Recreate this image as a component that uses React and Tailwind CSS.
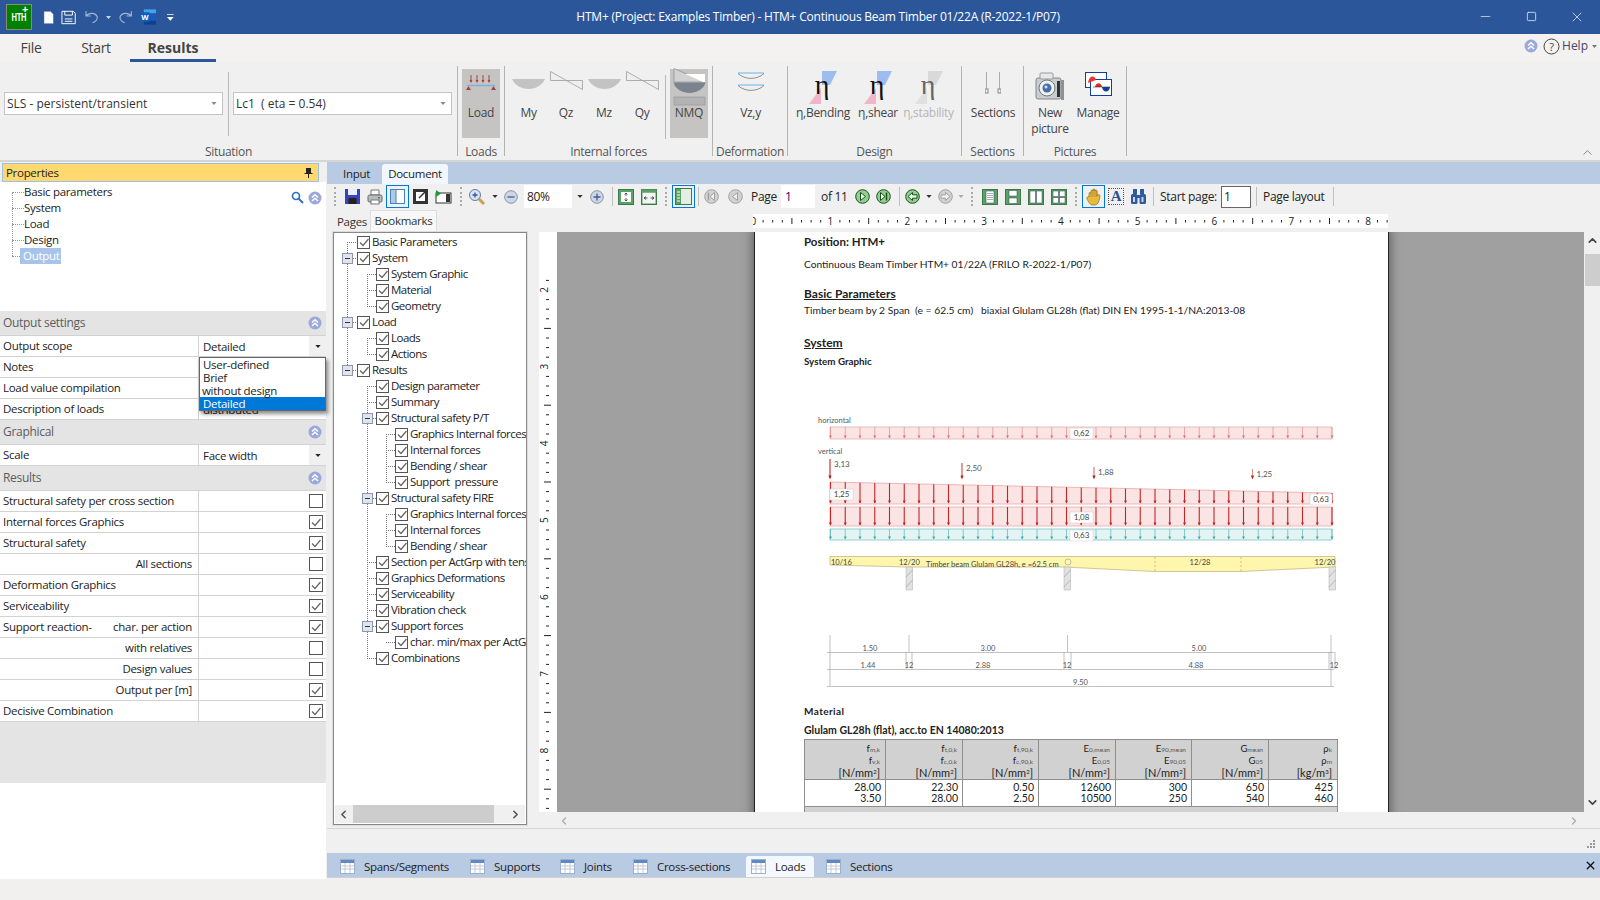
import React from "react";
import { ChevronUp, ChevronDown, ChevronLeft, ChevronRight, Minus, Square, X } from "lucide-react";

const Tri = ({ c = "#555", w = 7, h = 4, className = "" }) => (
  <svg width={w} height={h} viewBox="0 0 7 4" className={"shrink-0 " + className}><path d="M0 0H7L3.5 4Z" fill={c} /></svg>
);

const Chev = ({ className = "" }) => (
  <svg width="14" height="14" viewBox="0 0 14 14" className={"shrink-0 " + className}>
    <circle cx="7" cy="7" r="6.5" fill="#9aa8dc" />
    <path d="M4 6.5L7 3.8L10 6.5M4 10L7 7.3L10 10" fill="none" stroke="#fff" strokeWidth="1.5" />
  </svg>
);

const HtmLogo = () => (
  <div className="w-[26px] h-[26px] bg-[#008000] border border-[#8a8a70] flex items-center justify-center shrink-0 relative">
    <span className="font-['Liberation_Sans',sans-serif] text-white font-bold text-[10px] leading-none mt-[2px] scale-x-75">HTH</span>
    <span className="absolute right-[3px] top-[-2px] text-white text-[11px] leading-none font-bold">+</span>
  </div>
);

const Qat = () => (
  <div className="w-[174px] shrink-0 flex items-center pl-[6px]">
    <HtmLogo />
    <svg width="12" height="15" viewBox="0 0 12 15" className="ml-[11px]"><path d="M1 1H8L11 4V14H1Z" fill="#fff" stroke="#2b579a" strokeWidth="0.5" /></svg>
    <svg width="16" height="15" viewBox="0 0 16 15" className="ml-[7px]" fill="none" stroke="#fff"><path d="M1 1H13L15 3V14H1Z" /><path d="M4 1V5H12V1M4 9H12M4 11.5H12" /></svg>
    <svg width="14" height="14" viewBox="0 0 14 14" className="ml-[8px]" fill="none" stroke="#9fb4d2" strokeWidth="1.2"><path d="M1 1V6H6M1 6C4 2 11 2 13 7C13 10 11 12 8 13" /></svg>
    <Tri c="#cfd8e8" w={5} h={3} className="ml-[8px]" />
    <svg width="14" height="14" viewBox="0 0 14 14" className="ml-[8px]" fill="none" stroke="#9fb4d2" strokeWidth="1.2"><path d="M13 1V6H8M13 6C10 2 3 2 1 7C1 10 3 12 6 13" /></svg>
    <svg width="17" height="16" viewBox="0 0 17 16" className="ml-[8px]"><rect x="4" width="13" height="16" fill="#185abd" /><rect x="4" y="0" width="13" height="4" fill="#41a5ee" /><rect x="4" y="12" width="13" height="4" fill="#103f91" /><rect y="3" width="10" height="10" fill="#0f5fb5" /><text x="5" y="11" textAnchor="middle" fontSize="8" fontWeight="700" fill="#fff">W</text></svg>
    <svg width="7" height="7" viewBox="0 0 7 7" className="ml-[11px]"><path d="M0 0H7V1H0ZM0 3H7L3.5 7Z" fill="#fff" /></svg>
  </div>
);

const TitleBar = () => (
  <div className="h-[34px] bg-[#2b579a] flex items-center shrink-0 text-white">
    <Qat />
    <div className="flex-1 text-center text-[12px] tracking-[-0.22px]">HTM+ (Project: Examples Timber) - HTM+ Continuous Beam Timber 01/22A (R-2022-1/P07)</div>
    <div className="w-[138px] flex">
      <div className="w-[46px] flex justify-center"><Minus size={15} strokeWidth={1} /></div>
      <div className="w-[46px] flex justify-center"><Square size={11} strokeWidth={1.5} className="mt-[2px]" /></div>
      <div className="w-[46px] flex justify-center"><X size={16} strokeWidth={1} /></div>
    </div>
  </div>
);

const MenuTabs = () => (
  <div className="h-[28px] bg-[#f3f2f1] flex items-start shrink-0 text-[#444] text-[14px]">
    <div className="w-[62px] text-center leading-[28px]">File</div>
    <div className="w-[68px] text-center leading-[28px]">Start</div>
    <div className="w-[86px] h-[28px] text-center leading-[28px] font-bold border-b-[3px] border-[#2b579a] tracking-normal">Results</div>
    <div className="flex-1" />
    <div className="flex items-center h-[24px] text-[12px] mr-[3px]">
      <Chev />
      <svg width="17" height="17" viewBox="0 0 17 17" className="ml-[5px]"><circle cx="8.5" cy="8.5" r="7.5" fill="none" stroke="#444" /><text x="8.5" y="12.5" textAnchor="middle" fontSize="11" fill="#444">?</text></svg>
      <span className="ml-[2px] text-[#44466a] tracking-normal">Help</span>
      <Tri c="#777" w={5} h={3} className="ml-[4px]" />
    </div>
  </div>
);

const Combo = ({ children }) => (
  <div className="w-[219px] h-[23px] bg-white border border-[#c4c4c4] flex items-center pl-[2px] pr-[5px] text-[12px] text-[#333] tracking-normal">
    <span className="flex-1 whitespace-pre mt-[1px]">{children}</span>
    <Tri c="#888" w={6} h={3} />
  </div>
);

const RBtn = ({ w, active, icon, label, label2, dim }) => (
  <div className={"h-[69px] flex flex-col items-center shrink-0 " + w + (active ? " bg-[#c5c4c2]" : "")}>
    <div className="h-[36px] w-full flex items-center justify-center">{icon}</div>
    <div className={"text-[12px] leading-[16px] whitespace-nowrap text-center " + (dim ? "text-[#b5b5b5]" : "text-[#444]")}>{label}{label2 && <><br />{label2}</>}</div>
  </div>
);

const Group = ({ w, label, children }) => (
  <div className={"h-[90px] flex flex-col shrink-0 border-r border-[#b4b4b4] " + w}>
    <div className="h-[80px] pt-[3px] flex shrink-0">{children}</div>
    <div className="h-[12px] leading-[12px] text-[12px] text-[#555] text-center whitespace-nowrap shrink-0">{label}</div>
  </div>
);

const LoadIco = () => (
  <svg width="32" height="20" viewBox="0 0 32 20" className="mb-[6px]" fill="none">
    <g stroke="#a64444" strokeWidth="1"><path d="M6 1V8M12 1V8M18 1V8M24 1V8" /></g>
    <g fill="#a64444"><path d="M4.5 6H7.5L6 9ZM10.500 6H13.500L12 9ZM16.500 6H19.500L18 9ZM22.500 6H25.500L24 9Z" /><path d="M1 16L3.500 12L6 16ZM26 16L28.500 12L31 16Z" /></g>
    <path d="M2 11.500H30" stroke="#7fb0e0" strokeWidth="1.5" />
  </svg>
);
const Bowl = () => <svg width="33" height="12" viewBox="0 0 33 12" className="mb-[6px]"><path d="M0 1H33C30 8 22 11 16.500 11C11 11 3 8 0 1Z" fill="#c3c3c3" /></svg>;
const Zig = () => <svg width="33" height="19" viewBox="0 0 33 19" className="mb-[13px]" fill="#efefef" stroke="#9c9c9c" strokeWidth="0.8"><path d="M0.500 0.500L16.500 9.500H0.500Z" /><path d="M16.500 9.500H32.500V18.500Z" /></svg>;
const NmqIco = () => (
  <svg width="33" height="40" viewBox="0 0 33 40" className="mt-[2px]">
    <path d="M1 0.500L32 14H1Z" fill="#d2d2d2" stroke="#8d8d8d" strokeWidth="0.7" /><path d="M12 6L32 6V14H30Z" fill="#fff" />
    <path d="M0.500 14.500H32.500C31 21 23 25 16.500 25C10 25 2 21 0.500 14.500Z" fill="#7b838f" />
    <rect x="1" y="29" width="31" height="8" fill="#b3b3b3" stroke="#999" strokeWidth="0.7" />
  </svg>
);
const VzIco = () => (
  <svg width="28" height="20" viewBox="0 0 28 20" className="mb-[10px]" fill="none"><path d="M1 1H27M1 13H27" stroke="#6db3e8" strokeWidth="1" /><path d="M1 1.500C8 8 20 8 27 1.500M1 13.500C8 20 20 20 27 13.500" stroke="#666" strokeWidth="0.7" /></svg>
);
const EtaIco = ({ dim }) => (
  <svg width="30" height="34" viewBox="0 0 30 34" className="mt-[1px] overflow-visible">
    <path d="M14 0H29L22 14H14Z" fill={dim ? "#d9d9d9" : "#9dbdee"} />
    <path d="M1 33L13 17V33Z" fill={dim ? "#e0e0e0" : "#f2b4c9"} />
    <text x="14" y="23" textAnchor="middle" fontSize="28" fontFamily="'Liberation Serif',serif" fill={dim ? "#666" : "#111"} stroke="none">η</text>
  </svg>
);
const SecIco = () => (
  <svg width="16" height="22" viewBox="0 0 16 22" className="mb-[9px]" fill="none" stroke="#9a9a9a"><path d="M1.500 0V17M14.500 0V17" strokeWidth="0.8" /><rect x="0" y="17" width="3" height="4" stroke="#888" /><rect x="13" y="17" width="3" height="4" stroke="#888" /></svg>
);
const CamIco = () => (
  <svg width="30" height="29" viewBox="0 0 30 29" className="mt-[-2px]">
    <rect x="1" y="6" width="25" height="21" rx="2" fill="#c8cdd2" stroke="#888" />
    <rect x="5" y="1" width="13" height="6" rx="1" fill="#e6e8ea" stroke="#999" />
    <circle cx="12" cy="16" r="8" fill="#eef0f2" stroke="#777" /><circle cx="12" cy="16" r="4.500" fill="#456fa8" /><circle cx="11" cy="15" r="1.500" fill="#cfe1f5" />
    <rect x="22" y="9" width="3" height="16" fill="#333" /><rect x="26" y="8" width="3" height="20" fill="#8e9297" />
  </svg>
);
const ManIco = () => (
  <svg width="27" height="24" viewBox="0 0 27 24" className="mb-[7px]">
    <rect x="0.500" y="0.500" width="21" height="15" fill="#fff" stroke="#113f9c" />
    <rect x="5.500" y="7.500" width="21" height="16" fill="#fff" stroke="#113f9c" />
    <path d="M3 11C4 3 10 3 11 8" fill="#e33" /><path d="M10 15C11 10 16 10 17 15Z" fill="#e22" /><path d="M17 15H25C24 21 18 21 17 15Z" fill="#113f9c" /><path d="M8 15H25" stroke="#333" strokeWidth="0.6" />
  </svg>
);

const Ribbon = () => (
  <div className="h-[100px] bg-[#f0f0f0] border-b-2 border-[#d5d5d5] flex items-start pt-[4px] shrink-0 relative">
    <Group w="w-[458px]" label="Situation">
      <div className="w-[458px] flex items-start relative">
        <div className="ml-[4px] mt-[23px]"><Combo>SLS - persistent/transient</Combo></div>
        <div className="w-px h-[64px] bg-[#b8b8b8] ml-[5px] mt-[3px]" />
        <div className="ml-[4px] mt-[23px]"><Combo>Lc1  ( eta = 0.54)</Combo></div>
      </div>
    </Group>
    <Group w="w-[47px]" label="Loads"><div className="pl-[4px]"><RBtn w="w-[38px]" active icon={<LoadIco />} label="Load" /></div></Group>
    <Group w="w-[208px]" label="Internal forces">
      <div className="pl-[5px] flex w-full">
        <RBtn w="w-[37px]" icon={<Bowl />} label="My" />
        <RBtn w="w-[38px]" icon={<Zig />} label="Qz" />
        <RBtn w="w-[38px]" icon={<Bowl />} label="Mz" />
        <RBtn w="w-[38px]" icon={<Zig />} label="Qy" />
        <div className="w-px h-[64px] bg-[#b8b8b8] ml-[4px] mt-[6px]" />
        <div className="ml-[4px]"><RBtn w="w-[38px]" active icon={<NmqIco />} label="NMQ" /></div>
      </div>
    </Group>
    <Group w="w-[75px]" label="Deformation"><RBtn w="w-[75px]" icon={<VzIco />} label="Vz,y" /></Group>
    <Group w="w-[174px]" label="Design">
      <div className="flex">
        <RBtn w="w-[70px]" icon={<EtaIco />} label="η,Bending" />
        <RBtn w="w-[40px]" icon={<EtaIco />} label="η,shear" />
        <RBtn w="w-[61px]" icon={<EtaIco dim />} label="η,stability" dim />
      </div>
    </Group>
    <Group w="w-[62px]" label="Sections"><RBtn w="w-[62px]" icon={<SecIco />} label="Sections" /></Group>
    <Group w="w-[103px]" label="Pictures">
      <div className="flex pl-[3px]">
        <RBtn w="w-[46px]" icon={<CamIco />} label="New" label2="picture" />
        <RBtn w="w-[50px]" icon={<ManIco />} label="Manage" />
      </div>
    </Group>
    <ChevronUp size={15} strokeWidth={1.2} className="absolute right-[5px] bottom-[0px] text-[#666]" />
  </div>
);

const Head = ({ t }) => (
  <div className="h-[25px] bg-[#e4e4e4] border-b border-[#d2d2d2] flex items-center justify-between pl-[3px] pr-[4px] text-[#5c5c5c] text-[12px] font-medium">
    <span>{t}</span><Chev />
  </div>
);
const Box = ({ on, size = "w-[14px] h-[14px]" }) => (
  <div className={"border border-[#555] bg-white flex items-center justify-center shrink-0 " + size}>
    {on && <svg width="10" height="9" viewBox="0 0 10 9"><path d="M1 4.500L4 7.500L9.500 1" fill="none" stroke="#666" strokeWidth="1.2" /></svg>}
  </div>
);
const Row = ({ label, right, value, arrow, check, on }) => (
  <div className="h-[21px] border-b border-[#d2d2d2] flex bg-white text-[#222] text-[11.500px] leading-[20px]">
    <div className={"w-[199px] shrink-0 border-r border-[#d2d2d2] pl-[3px] pr-[6px] flex justify-between whitespace-nowrap"}><span>{label}</span>{right && <span>{right}</span>}</div>
    <div className="flex-1 flex items-center pl-[4px]">
      {value && <span className="flex-1 mt-[1px]">{value}</span>}
      {arrow && <div className="w-[17px] h-[20px] bg-[#f0f0f0] flex items-center justify-center"><Tri c="#222" w={6} h={3} /></div>}
      {check && <div className="flex-1 flex justify-end pr-[3px]"><Box on={on} /></div>}
    </div>
  </div>
);

const LeftPanel = () => (
  <div className="w-[327px] shrink-0 h-full flex flex-col bg-white border-r-[1px] border-[#f0f0f0] relative">
    <div className="h-[20px] bg-[#f0f0f0] pt-[1px] pl-[2px] pr-[7px] shrink-0">
      <div className="h-[19px] bg-[#ffd96f] border border-[#9cc0e6] flex items-center justify-between pl-[3px] pr-[5px] text-[11.500px] text-[#222]">
        <span>Properties</span>
        <svg width="9" height="11" viewBox="0 0 9 11"><path d="M2 1H7V6H8.500V7H5V11H4V7H0.500V6H2Z" fill="#222" /></svg>
      </div>
    </div>
    <div className="h-[129px] relative pt-[2px] pl-[12px] shrink-0 text-[11.500px] text-[#222] leading-[16px]">
      <div className="border-l border-dotted border-[#999] absolute left-[12px] top-[10px] h-[64px]" />
      {["Basic parameters", "System", "Load", "Design"].map((t) => (
        <div key={t} className="h-[16px] flex items-center"><span className="w-[12px] border-t border-dotted border-[#999]" /><span>{t}</span></div>
      ))}
      <div className="h-[16px] flex items-center"><span className="w-[8px] border-t border-dotted border-[#999]" /><span className="bg-[#a8c4ea] text-white px-[3px] w-[41px]">Output</span></div>
      <svg width="13" height="13" viewBox="0 0 13 13" className="absolute right-[22px] top-[9px]" fill="none"><circle cx="5" cy="5" r="3.500" stroke="#2f6fc6" strokeWidth="1.700" /><path d="M7.500 7.500L12 12" stroke="#2f6fc6" strokeWidth="2" /></svg>
      <Chev className="absolute right-[4px] top-[9px]" />
    </div>
    <div className="flex flex-col shrink-0">
      <Head t="Output settings" />
      <Row label="Output scope" value="Detailed" arrow />
      <Row label="Notes" />
      <Row label="Load value compilation" />
      <Row label="Description of loads" value="distributed" />
      <Head t="Graphical" />
      <Row label="Scale" value="Face width" arrow />
      <Head t="Results" />
      <Row label="Structural safety per cross section" check />
      <Row label="Internal forces Graphics" check on />
      <Row label="Structural safety" check on />
      <Row label="" right="All sections" check />
      <Row label="Deformation Graphics" check on />
      <Row label="Serviceability" check on />
      <Row label="Support reaction-" right="char. per action" check on />
      <Row label="" right="with relatives" check />
      <Row label="" right="Design values" check />
      <Row label="" right="Output per [m]" check on />
      <Row label="Decisive Combination" check on />
    </div>
    <div className="h-[61px] bg-[#e4e4e4] shrink-0" />
    <div className="flex-1 bg-white" />
    <div className="absolute left-[199px] top-[195px] w-[127px] h-[54px] bg-white border border-[#666] shadow-[2px_3px_4px_rgba(0,0,0,0.45)] text-[11.500px] leading-[13px] text-[#222] z-10">
      <div className="pl-[3px]">User-defined</div>
      <div className="pl-[3px]">Brief</div>
      <div className="pl-[2px]">without design</div>
      <div className="pl-[3px] bg-[#0078d7] text-white">Detailed</div>
    </div>
  </div>
);

const Grip = () => <div className="w-[2px] h-[19px] border-l-2 border-dotted border-[#aaa] mx-[5px] shrink-0" />;
const Sep = () => <div className="w-px h-[19px] bg-[#c0c0c0] shrink-0" />;
const Slot = ({ w = "w-[23px]", on, children }) => (
  <div className={"h-[24px] flex items-center justify-center shrink-0 " + w}>
    {on ? <div className="w-[23px] h-[23px] border border-[#0078d7] flex items-center justify-center">{children}</div> : children}
  </div>
);
const Round = ({ d, dim }) => {
  const f = dim ? "#d2d2d2" : "#8fd08f";
  const s = dim ? "#a0a0a0" : "#1e4d1e";
  const t = dim ? "#f0f0f0" : "#eaffea";
  return (
    <svg width="15" height="15" viewBox="0 0 15 15">
      <circle cx="7.500" cy="7.500" r="6.800" fill={f} stroke={s} />
      {d === "r" && <path d="M5.500 3.500L10.500 7.500L5.500 11.500Z" fill={t} stroke={s} />}
      {d === "l" && <path d="M9.500 3.500L4.500 7.500L9.500 11.500Z" fill={t} stroke={s} />}
      {d === "rr" && <><path d="M4.500 3.500L9 7.500L4.500 11.500Z" fill={t} stroke={s} /><path d="M10.500 3.500V11.500" stroke={s} strokeWidth="1.500" /></>}
      {d === "ll" && <><path d="M10.500 3.500L6 7.500L10.500 11.500Z" fill={t} stroke={s} /><path d="M4.500 3.500V11.500" stroke={s} strokeWidth="1.500" /></>}
      {d === "al" && <path d="M3 7.500L7.500 3.500V5.800H12V9.200H7.500V11.500Z" fill={t} stroke={s} />}
      {d === "ar" && <path d="M12 7.500L7.500 3.500V5.800H3V9.200H7.500V11.500Z" fill={t} stroke={s} />}
    </svg>
  );
};
const PageBtn = ({ v }) => (
  <svg width="16" height="16" viewBox="0 0 16 16">
    <rect x="0.500" y="0.500" width="15" height="15" fill="#5aa267" stroke="#3c7a48" />
    {v === 0 && <g><rect x="4" y="2" width="8" height="12" fill="#fff" stroke="#345" strokeWidth="0.5" /><path d="M5 4.500H11M5 6.500H11M5 8.500H11M5 10.500H11" stroke="#789" strokeWidth="0.7" /></g>}
    {v === 1 && <g><rect x="4" y="1.500" width="8" height="5.500" fill="#fff" stroke="#345" strokeWidth="0.5" /><rect x="4" y="9" width="8" height="5.500" fill="#fff" stroke="#345" strokeWidth="0.5" /></g>}
    {v === 2 && <g><rect x="2" y="2" width="5.500" height="12" fill="#fff" stroke="#345" strokeWidth="0.5" /><rect x="8.500" y="2" width="5.500" height="12" fill="#fff" stroke="#345" strokeWidth="0.5" /></g>}
    {v === 3 && <g fill="#fff" stroke="#345" strokeWidth="0.5"><rect x="2" y="2" width="5.500" height="5.500" /><rect x="8.500" y="2" width="5.500" height="5.500" /><rect x="2" y="8.500" width="5.500" height="5.500" /><rect x="8.500" y="8.500" width="5.500" height="5.500" /></g>}
    {v === 4 && <g><rect x="3" y="3" width="10" height="10" fill="#fff" /><path d="M8 4V7M6.500 5.500L8 4L9.500 5.500M8 12V9M6.500 10.500L8 12L9.500 10.500" stroke="#333" strokeWidth="0.8" fill="none" /></g>}
    {v === 5 && <g><rect x="1.500" y="3.500" width="13" height="11" fill="#f4f4f4" /><rect x="0.500" y="0.500" width="15" height="3" fill="#5aa267" /><path d="M3 9H6.500M5 7.500L3 9L5 10.500M13 9H9.500M11 7.500L13 9L11 10.500" stroke="#333" strokeWidth="0.8" fill="none" /></g>}
  </svg>
);
const Mag = () => (
  <svg width="18" height="18" viewBox="0 0 18 18"><path d="M10 10L16 16" stroke="#c9a24a" strokeWidth="3" /><circle cx="7" cy="7" r="5.500" fill="#d9e3f2" stroke="#6a7a99" /><path d="M4.500 7H9.500M7 4.500V9.500" stroke="#2c5aa8" strokeWidth="1.300" /></svg>
);
const Pm = ({ plus }) => (
  <svg width="14" height="14" viewBox="0 0 14 14"><circle cx="7" cy="7" r="6.300" fill="#cfd6e2" stroke="#8793a8" /><path d={plus ? "M3.500 7H10.500M7 3.500V10.500" : "M3.500 7H10.500"} stroke="#3a5f9e" strokeWidth="1.300" /></svg>
);

const Toolbar = () => (
  <div className="h-[24px] bg-[#f0f0f0] flex items-center pl-[2px] pt-[1px] shrink-0 text-[12px] text-[#222]">
    <Grip />
    <Slot w="w-[22px]"><svg width="15" height="15" viewBox="0 0 15 15"><rect width="15" height="15" fill="#3a43b5" /><rect x="3" y="0" width="9" height="6" fill="#e8eefc" /><rect x="3.500" y="9" width="8" height="6" fill="#222" /></svg></Slot>
    <Slot><svg width="16" height="16" viewBox="0 0 16 16"><path d="M4 1H12V6H4Z" fill="#fff" stroke="#777" /><rect x="1" y="6" width="14" height="7" rx="1.500" fill="#b8bcc2" stroke="#666" /><rect x="4" y="11" width="8" height="4" fill="#fff" stroke="#777" /><rect x="11" y="8" width="2" height="1.500" fill="#2ca02c" /></svg></Slot>
    <Slot on><svg width="15" height="15" viewBox="0 0 15 15"><rect x="0.500" y="0.500" width="14" height="14" fill="#fff" stroke="#4a7fb8" /><rect x="1" y="1" width="5" height="13" fill="#a6cdea" /><path d="M6 1V14" stroke="#4a7fb8" /></svg></Slot>
    <Slot><svg width="15" height="15" viewBox="0 0 15 15"><rect width="15" height="15" fill="#333" /><rect x="3" y="3" width="9" height="9" fill="#fff" /><path d="M6 9L13 2M9 2H13V6" stroke="#333" strokeWidth="1.500" fill="none" /></svg></Slot>
    <Slot><svg width="17" height="15" viewBox="0 0 17 15"><rect x="1" y="4" width="15" height="10" fill="#fff" stroke="#333" /><rect x="11" y="5" width="4" height="8" fill="#333" /><path d="M1 1V8L6 4.500Z" fill="#1f9a3c" /></svg></Slot>
    <Grip />
    <Slot w="w-[20px]"><Mag /></Slot>
    <Slot w="w-[16px]"><Tri c="#333" w={6} h={3} /></Slot>
    <Slot w="w-[16px]"><Pm /></Slot>
    <div className="ml-[5px] w-[48px] h-[24px] bg-white flex items-center pl-[3px] shrink-0">80%</div>
    <Slot w="w-[16px]"><Tri c="#333" w={6} h={3} /></Slot>
    <Slot w="w-[17px]"><Pm plus /></Slot>
    <div className="w-[7px]" /><Sep />
    <Slot w="w-[26px]"><PageBtn v={4} /></Slot>
    <Slot w="w-[20px]"><PageBtn v={5} /></Slot>
    <div className="w-[1px]" /><Grip />
    <Slot on><svg width="17" height="17" viewBox="0 0 17 17"><rect x="0.500" y="0.500" width="16" height="16" fill="#5aa267" stroke="#3c7a48" /><rect x="6" y="1" width="10" height="15" fill="#e2efe4" /><path d="M2 4H5M2 7H5M2 10H5M2 13H5" stroke="#fff" /></svg></Slot>
    <div className="w-[3px]" /><Sep />
    <Slot w="w-[24px]"><Round d="ll" dim /></Slot>
    <Slot w="w-[24px]"><Round d="l" dim /></Slot>
    <div className="w-[4px]" />
    <div className="w-[30px] whitespace-nowrap">Page</div>
    <div className="w-[34px] h-[24px] bg-white flex items-center pl-[4px] text-[#306] shrink-0">1</div>
    <div className="w-[6px]" />
    <div className="w-[31px] whitespace-nowrap">of 11</div>
    <Slot w="w-[20px]"><Round d="r" /></Slot>
    <Slot w="w-[23px]"><Round d="rr" /></Slot>
    <div className="w-[4px]" /><Sep />
    <Slot w="w-[24px]"><Round d="al" /></Slot>
    <Slot w="w-[10px]"><Tri c="#333" w={6} h={3} /></Slot>
    <Slot w="w-[22px]"><Round d="ar" dim /></Slot>
    <Slot w="w-[10px]"><Tri c="#aaa" w={6} h={3} /></Slot>
    <Grip />
    <Slot><PageBtn v={0} /></Slot>
    <Slot><PageBtn v={1} /></Slot>
    <Slot><PageBtn v={2} /></Slot>
    <Slot><PageBtn v={3} /></Slot>
    <Grip />
    <Slot on><svg width="16" height="18" viewBox="0 0 16 18"><path d="M3 9V5.500C3 4 5 4 5 5.500V3C5 1.500 7 1.500 7 3V2C7 .5 9 .5 9 2V3C9 1.500 11 1.500 11 3V8C11.500 6 14 6 14 8C13.500 11 12.500 17 9 17H6C4 17 2 13 1 11C.5 9 2.500 8 3 9Z" fill="#e8b93c" stroke="#8a6d1f" strokeWidth="0.7" /><path d="M5 5.500V9M7 3V9M9 2V9M11 3V9" stroke="#8a6d1f" strokeWidth="0.5" /></svg></Slot>
    <Slot w="w-[22px]"><div className="w-[16px] h-[17px] border border-dotted border-[#555] flex items-center justify-center font-['Liberation_Serif',serif] font-bold text-[#2d4f8e] text-[15px] leading-none">A</div></Slot>
    <Slot w="w-[22px]"><svg width="17" height="15" viewBox="0 0 17 15" fill="#2f5aa0"><rect x="3" y="0" width="4" height="5" /><rect x="10" y="0" width="4" height="5" /><rect x="1" y="5" width="6.500" height="10" rx="1.500" /><rect x="9.500" y="5" width="6.500" height="10" rx="1.500" /><rect x="6" y="6" width="5" height="3" /><rect x="3" y="8" width="2" height="5" fill="#c5d5ee" /><rect x="11.500" y="8" width="2" height="5" fill="#c5d5ee" /></svg></Slot>
    <div className="w-[4px]" /><Sep />
    <div className="ml-[6px] w-[61px] whitespace-nowrap">Start page:</div>
    <div className="w-[30px] h-[22px] border border-[#666] bg-white flex items-center pl-[2px] shrink-0">1</div>
    <div className="w-[5px]" /><Sep />
    <div className="ml-[6px] w-[70px] whitespace-nowrap">Page layout</div>
    <Sep />
  </div>
);

const tree = [
  [0, "Basic Parameters"], [0, "System", 1], [1, "System Graphic"], [1, "Material"], [1, "Geometry"], [0, "Load", 1], [1, "Loads"], [1, "Actions"],
  [0, "Results", 1], [1, "Design parameter"], [1, "Summary"], [1, "Structural safety P/T", 1], [2, "Graphics Internal forces"], [2, "Internal forces"], [2, "Bending / shear"], [2, "Support  pressure"],
  [1, "Structural safety FIRE", 1], [2, "Graphics Internal forces"], [2, "Internal forces"], [2, "Bending / shear"], [1, "Section per ActGrp with tension"], [1, "Graphics Deformations"], [1, "Serviceability"], [1, "Vibration check"], [1, "Support forces", 1], [2, "char. min/max per ActGrp"], [1, "Combinations"],
];
const guideX = [13, 33, 52];
const TreeLines = () => {
  const cy = (i) => 9 + i * 16;
  const segs = [];
  tree.forEach(([l], i) => {
    segs.push(<path key={"h" + i} d={`M${guideX[l]} ${cy(i) + .5}H${guideX[l] + 10}`} stroke="#777" strokeDasharray="1 1" />);
    let j = i + 1;
    while (j < tree.length && tree[j][0] > l) j++;
    if (j < tree.length && tree[j][0] === l) segs.push(<path key={"v" + i} d={`M${guideX[l] + .5} ${cy(i)}V${cy(j)}`} stroke="#777" strokeDasharray="1 1" />);
  });
  const boxes = tree.map(([l, , e], i) => e ? (
    <g key={"b" + i}><rect x={guideX[l] - 4.500} y={cy(i) - 4.500} width="10" height="10" fill="#dfe4ee" stroke="#8d97ab" /><path d={`M${guideX[l] - 2} ${cy(i) + .5}H${guideX[l] + 3}`} stroke="#333" /></g>
  ) : null);
  return <svg width="70" height="450" className="absolute left-0 top-0">{segs}{boxes}</svg>;
};
const TreePanel = () => (
  <div className="w-[203px] shrink-0 ml-[4px] flex flex-col h-full">
    <div className="h-[24px] flex items-end pl-[3px] text-[11.500px] text-[#333] shrink-0">
      <div className="h-[21px] w-[36px] pl-[3px] leading-[22px] mt-[2px]">Pages</div>
      <div className="h-[22px] w-[67px] bg-[#f8f8f8] text-center leading-[19px] border-t border-x border-[#ddd]">Bookmarks</div>
    </div>
    <div className="ml-[2px] w-[194px] h-[593px] border border-[#888] bg-white relative overflow-hidden outline outline-1 outline-[#ddd] flex flex-col shrink-0">
      <div className="flex-1 relative overflow-hidden">
        <TreeLines />
        <div className="pt-[1px] relative text-[11.500px] text-[#222] tracking-[-0.5px]">
          {tree.map(([l, t], i) => (
            <div key={i} className="h-[16px] flex items-center whitespace-pre" style={{ paddingLeft: 23 + l * 19 }}>
              <Box on size="w-[13px] h-[13px]" /><span className="ml-[2px]">{t}</span>
            </div>
          ))}
        </div>
      </div>
      <div className="h-[18px] bg-[#f0f0f0] flex items-center shrink-0 mx-[1px] mb-[1px]">
        <ChevronLeft size={13} strokeWidth={3} className="ml-[2px] text-[#555]" />
        <div className="ml-[3px] w-[141px] h-[18px] bg-[#cdcdcd]" />
        <div className="flex-1" />
        <ChevronRight size={13} strokeWidth={3} className="mr-[3px] text-[#555]" />
      </div>
    </div>
  </div>
);

const HRuler = () => {
  const items = [];
  for (let k = 0; k <= 66; k++) {
    const x = k * 9.6 + 0.5;
    if (k % 8 === 0) { if (k > 0) items.push(<text key={k} x={x} y="11" textAnchor="middle" fontSize="10" fill="#222">{k / 8}</text>); else items.push(<text key={k} x="-2.500" y="11" fontSize="10" fill="#222">0</text>); }
    else items.push(<path key={k} d={k % 8 === 4 ? `M${x} 4V10` : `M${x} 6V8.500`} stroke="#222" strokeWidth="1" />);
  }
  return <svg width="635" height="14" className="bg-white block">{items}</svg>;
};
const VRuler = () => {
  const items = [];
  for (let k = -1; k <= 60; k++) {
    const y = 58 + k * 9.6;
    if (k % 8 === 0 && k >= 0) items.push(<text key={k} x="0" y="0" textAnchor="middle" fontSize="10" fill="#222" transform={`translate(9 ${y}) rotate(-90)`}>{k / 8 + 2}</text>);
    else items.push(<path key={k} d={`M${(k + 80) % 8 === 4 ? 5 : 7} ${y}H${(k + 80) % 8 === 4 ? 12 : 10}`} stroke="#222" />);
  }
  return <svg width="18" height="580" className="bg-white block shrink-0">{items}</svg>;
};

const Lbl = ({ x, y, w = 22, t, h = 11 }) => (
  <g><rect x={x} y={y} width={w} height={h} fill="#fff" stroke="#ccc" strokeWidth="0.5" /><text x={x + w / 2} y={y + 8.300} textAnchor="middle" fontSize="8" fill="#444">{t}</text></g>
);
const Band = ({ y1, y2, fill, stroke, arrow, heavy, slope = 0 }) => {
  const xs = Array.from({ length: 35 }, (_, i) => 830.5 + i * 14.75);
  return (
    <g>
      <path d={`M830 ${y1}L1332 ${y1 + slope}V${y2}H830Z`} fill={fill} stroke={stroke} strokeWidth="0.8" />
      {xs.map((x, i) => {
        const t = y1 + (slope * (x - 830)) / 502;
        return <g key={i}><path d={`M${x} ${t}V${y2 - 1}`} stroke={arrow} strokeWidth={heavy ? 1.100 : 0.700} opacity={heavy ? 1 : 0.800} /><path d={`M${x - 1.500} ${y2 - 3.500}H${x + 1.500}L${x} ${y2 - 0.500}Z`} fill={arrow} /></g>;
      })}
    </g>
  );
};
const PtLoad = ({ x, y, t, sw = 1.200 }) => (
  <g><path d={`M${x} ${y}V478`} stroke="#c53a3a" strokeWidth={sw} /><path d={`M${x - 1.600} 475.500H${x + 1.600}L${x} 479.500Z`} fill="#b02020" /><text x={x + 4} y={y + 8} fontSize="8" fill="#555">{t}</text></g>
);
const Sup = ({ x }) => (
  <g><rect x={x} y="567" width="6.500" height="23" fill="#e2e2e2" stroke="#aaa" strokeWidth="0.5" /><path d={`M${x} 577L${x + 6.500} 570M${x} 587L${x + 6.500} 580`} stroke="#888" strokeWidth="0.5" /></g>
);
const T = ({ x, y, t, a = "middle", s = 7.500, c = "#555" }) => <text x={x} y={y} textAnchor={a} fontSize={s} fill={c}>{t}</text>;

const Diagram = () => (
  <svg width="635" height="284" viewBox="754 412 635 284" className="block ml-[-50px] font-['Lato',sans-serif]">
    <T x={818} y={423} t="horizontal" a="start" />
    <Band y1={427} y2={439} fill="#fae4e4" stroke="#e6b0b0" arrow="#d97a7a" />
    <Lbl x={1070} y={428} w={23} t="0,62" />
    <T x={818} y={454} t="vertical" a="start" />
    <PtLoad x={830} y={459} t="3,13" />
    <PtLoad x={962} y={463} t="2,50" sw={1} />
    <PtLoad x={1094} y={467} t="1,88" sw={0.800} />
    <PtLoad x={1252.500} y={469} t="1,25" sw={0.600} />
    <Band y1={482} y2={504} slope={11} fill="#fae4e4" stroke="#e9a8a8" arrow="#c42525" heavy />
    <Lbl x={830} y={489} w={23} t="1,25" />
    <Lbl x={1310} y={494} w={22} t="0,63" />
    <Band y1={507} y2={526} fill="#fae4e4" stroke="#e9a8a8" arrow="#c42525" heavy />
    <Lbl x={1070} y={512} w={23} t="1,08" />
    <Band y1={529} y2={540} fill="#e4f4f4" stroke="#7cc8c8" arrow="#46a8a8" />
    <Lbl x={1070} y={530} w={23} t="0,63" />
    <path d="M830 556.500H1335V567L1241 571.500H1155L1064 567H906L830 565Z" fill="#fff6ae" stroke="#b9b07a" strokeWidth="0.7" />
    <path d="M1155 557V571M1241 557V571" stroke="#b9a050" strokeDasharray="2 2" strokeWidth="0.6" />
    <T x={831} y={565} t="10/16" a="start" c="#444" />
    <T x={899} y={565} t="12/20" a="start" c="#444" />
    <T x={926} y={567} t="Timber beam Glulam GL28h, e =62.5 cm" a="start" s={7.500} c="#444" />
    <circle cx="1068" cy="562" r="3" fill="none" stroke="#999" strokeWidth="0.6" />
    <T x={1200} y={565} t="12/28" c="#444" />
    <T x={1325} y={565} t="12/20" c="#444" />
    <Sup x={906} /><Sup x={1064} /><Sup x={1329} />
    <g stroke="#999" strokeWidth="0.6">
      <path d="M827 652.500H1334M827 669.500H1334M827 686.500H1334" />
      <path d="M830 635V686M909 635V652M1067.500 635V652M1331 635V686M906 652V669M912 652V669M1064 652V669M1071 652V669M1329 652V669M1335 652V669" />
    </g>
    <T x={870} y={651} t="1.50" />
    <T x={988} y={651} t="3.00" />
    <T x={1199} y={651} t="5.00" />
    <T x={868} y={668} t="1.44" />
    <T x={909} y={668} t="12" />
    <T x={983} y={668} t="2.88" />
    <T x={1067} y={668} t="12" />
    <T x={1196} y={668} t="4.88" />
    <T x={1334} y={668} t="12" />
    <T x={1080.500} y={685} t="9.50" />
  </svg>
);

const Hd = ({ a, as, b, bs, u, sup }) => (
  <th className="bg-[#d1d1d1] border border-[#8e8e8e] text-right pr-[5px] font-normal align-top text-[#222]">
    <div className="leading-[11px] pt-[3px] text-[9.500px] whitespace-nowrap">{a}<span className="text-[6.500px] text-[#555]">{as}</span></div>
    <div className="leading-[11px] text-[9.500px] whitespace-nowrap">{b}<span className="text-[6.500px] text-[#555]">{bs}</span></div>
    <div className="leading-[12px] text-[11px] whitespace-nowrap">{u}<sup className="text-[6px]">{sup}</sup>]</div>
  </th>
);
const Val = ({ a, b }) => (
  <td className="border border-[#8e8e8e] text-right pr-[4px] text-[10.500px] leading-[11px] text-[#222] bg-white"><div>{a}</div><div>{b}</div></td>
);

const Page = () => (
  <div className="ml-[197px] w-[635px] h-[620px] bg-white border-x border-[#222] shadow-[0_0_8px_3px_rgba(60,60,60,0.5)] pl-[49px] pt-[2px] shrink-0 font-['Lato',sans-serif] text-[#222] leading-[16px] tracking-normal">
    <div className="h-[16px] font-bold text-[11.500px]">Position: HTM+</div>
    <div className="h-[16px] mt-[6px] text-[10.200px]">Continuous Beam Timber HTM+ 01/22A (FRILO R-2022-1/P07)</div>
    <div className="h-[16px] mt-[14px] font-bold text-[12px] underline">Basic Parameters</div>
    <div className="h-[16px] text-[10.300px] whitespace-pre">Timber beam by 2 Span  (e = 62.5 cm)   biaxial Glulam GL28h (flat) DIN EN 1995-1-1/NA:2013-08</div>
    <div className="h-[16px] mt-[17px] font-bold text-[12px] underline">System</div>
    <div className="h-[16px] mt-[2px] font-bold text-[9.800px]">System Graphic</div>
    <div className="mt-[43px] h-[284px]"><Diagram /></div>
    <div className="h-[16px] mt-[7px] font-bold text-[10px] tracking-[0.4px]">Material</div>
    <div className="h-[16px] mt-[3px] font-bold text-[10.500px]">Glulam GL28h (flat), acc.to EN 14080:2013</div>
    <table className="mt-[1px] w-[533px] border-collapse table-fixed border border-[#8e8e8e]">
      <colgroup><col className="w-[81px]" /><col className="w-[77px]" /><col className="w-[76px]" /><col className="w-[77px]" /><col className="w-[76px]" /><col className="w-[77px]" /><col className="w-[69px]" /></colgroup>
      <thead>
        <tr className="h-[38px]">
          <Hd a="f" as="m,k" b="f" bs="v,k" u="[N/mm" sup="2" />
          <Hd a="f" as="t,0,k" b="f" bs="c,0,k" u="[N/mm" sup="2" />
          <Hd a="f" as="t,90,k" b="f" bs="c,90,k" u="[N/mm" sup="2" />
          <Hd a="E" as="0,mean" b="E" bs="0,05" u="[N/mm" sup="2" />
          <Hd a="E" as="90,mean" b="E" bs="90,05" u="[N/mm" sup="2" />
          <Hd a="G" as="mean" b="G" bs="05" u="[N/mm" sup="2" />
          <Hd a="ρ" as="k" b="ρ" bs="m" u="[kg/m" sup="3" />
        </tr>
      </thead>
      <tbody>
        <tr className="h-[27px]">
          <Val a="28.00" b="3.50" /><Val a="22.30" b="28.00" /><Val a="0.50" b="2.50" /><Val a="12600" b="10500" /><Val a="300" b="250" /><Val a="650" b="540" /><Val a="425" b="460" />
        </tr>
        <tr><td colSpan={7} className="bg-[#d1d1d1] border border-[#8e8e8e]"><div className="h-[26px] bg-[#d1d1d1]" /></td></tr>
      </tbody>
    </table>
  </div>
);

const DocView = () => (
  <div className="flex-1 flex flex-col min-w-0 ml-[5px]">
    <div className="h-[24px] pt-[6px] pl-[214px] shrink-0"><HRuler /></div>
    <div className="h-[580px] flex shrink-0 overflow-hidden">
      <VRuler />
      <div className="flex-1 bg-[#a0a0a0] overflow-hidden flex min-w-0"><Page /></div>
      <div className="w-[16px] shrink-0 bg-[#f0f0f0] flex flex-col items-center relative">
        <ChevronUp size={13} strokeWidth={3} className="mt-[2px] text-[#444]" />
        <div className="w-[15px] h-[32px] mt-[7px] bg-[#cdcdcd]" />
        <div className="flex-1" />
        <ChevronDown size={13} strokeWidth={3} className="mb-[3px] text-[#444]" />
      </div>
    </div>
    <div className="h-[17px] flex items-center justify-between pl-[19px] pr-[20px] shrink-0">
      <ChevronLeft size={12} strokeWidth={2.5} className="text-[#aaa]" />
      <ChevronRight size={12} strokeWidth={2.5} className="text-[#aaa]" />
    </div>
  </div>
);

const TabIco = () => (
  <svg width="15" height="15" viewBox="0 0 15 15" className="shrink-0"><rect x="0.500" y="0.500" width="14" height="14" fill="#fff" stroke="#9bb0cf" /><rect x="1" y="1" width="13" height="3" fill="#5f88c4" /><path d="M1 7H14M1 10H14M5 4V14M10 4V14" stroke="#c2c9d4" /></svg>
);
const BTab = ({ w, pl, t, active }) => (
  <div className={"h-[21px] flex items-center shrink-0 rounded-t-[3px] " + w + " " + pl + (active ? " bg-[#f3f8fe]" : "")}>
    <TabIco /><span className="ml-[9px] whitespace-nowrap">{t}</span>
  </div>
);

const RightPanel = () => (
  <div className="flex-1 min-w-0 flex flex-col h-full">
    <div className="h-[22px] bg-[#b9cbe3] flex items-end pl-[4px] text-[11.500px] text-[#222] shrink-0">
      <div className="w-[51px] h-[20px] text-center leading-[20px]">Input</div>
      <div className="w-[66px] h-[20px] bg-[#f2f7fd] rounded-t-[3px] text-center leading-[20px]">Document</div>
    </div>
    <Toolbar />
    <div className="h-[621px] flex border-b border-[#d5d5d5] shrink-0 bg-[#f0f0f0]">
      <TreePanel />
      <DocView />
    </div>
    <div className="h-[24px] flex justify-end items-end pr-[4px] pb-[4px] shrink-0">
      <svg width="10" height="10" viewBox="0 0 10 10" fill="#999"><rect x="7" y="1" width="2" height="2" /><rect x="7" y="4" width="2" height="2" /><rect x="7" y="7" width="2" height="2" /><rect x="4" y="4" width="2" height="2" /><rect x="4" y="7" width="2" height="2" /><rect x="1" y="7" width="2" height="2" /></svg>
    </div>
    <div className="h-[25px] bg-[#b9cbe3] flex items-end text-[11.500px] text-[#222] border-b border-[#d0d0d0] shrink-0">
      <div className="w-[2px]" />
      <BTab w="w-[134px]" pl="pl-[11px]" t="Spans/Segments" />
      <BTab w="w-[90px]" pl="pl-[7px]" t="Supports" />
      <BTab w="w-[73px]" pl="pl-[7px]" t="Joints" />
      <BTab w="w-[120px]" pl="pl-[7px]" t="Cross-sections" />
      <BTab w="w-[68px]" pl="pl-[5px]" t="Loads" active />
      <BTab w="w-[90px]" pl="pl-[12px]" t="Sections" />
      <div className="flex-1" />
      <X size={13} strokeWidth={2.5} className="mr-[3px] mb-[5px] text-[#111]" />
    </div>
  </div>
);

export default function App() {
  return (
    <div className="w-[1600px] h-[900px] flex flex-col overflow-hidden bg-[#f0f0f0] font-['Open_Sans',sans-serif] tracking-[-0.3px]">
      <TitleBar />
      <MenuTabs />
      <Ribbon />
      <div className="h-[717px] flex shrink-0">
        <LeftPanel />
        <RightPanel />
      </div>
      <div className="flex-1 bg-[#f1f0ef]" />
    </div>
  );
}
